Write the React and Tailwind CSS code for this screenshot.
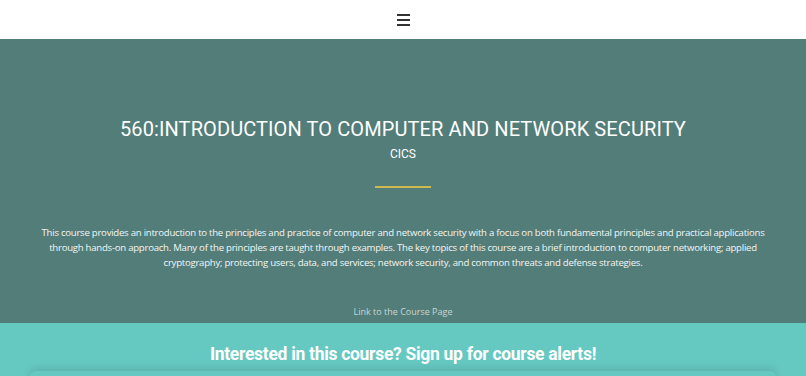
import React from 'react';

const App = () => {
    return (
        <div className="w-[806px] h-[376px] overflow-hidden bg-white">
            <header className="h-[39px] bg-white flex items-center justify-center">
                <button className="flex flex-col gap-[3px] w-[13px]" aria-label="Menu">
                    <span className="block h-[2px] w-full bg-[#333]" />
                    <span className="block h-[2px] w-full bg-[#333]" />
                    <span className="block h-[2px] w-full bg-[#333]" />
                </button>
            </header>

            <section className="h-[284px] bg-[#527d79] flex flex-col items-center text-white">
                <h1 className="mt-[77px] text-[20px] leading-[26px] font-['Roboto',sans-serif] font-normal tracking-[0.1px]">
                    560:INTRODUCTION TO COMPUTER AND NETWORK SECURITY
                </h1>
                <div className="mt-[5px] text-[12px] leading-[14px] font-['Roboto',sans-serif]">CICS</div>
                <div className="mt-[25px] h-[2px] w-[56px] bg-[#cfb84d]" />
                <p className="mt-[37px] w-[730px] text-center text-[9.6px] tracking-[-0.25px] leading-[15px] font-['Open_Sans',sans-serif] text-[#f2f5f4]">
                    This course provides an introduction to the principles and practice of computer and network security with a focus on both fundamental principles and practical applications through hands-on approach. Many of the principles are taught through examples. The key topics of this course are a brief introduction to computer networking; applied cryptography; protecting users, data, and services; network security, and common threats and defense strategies.
                </p>
                <a href="#" className="mt-[35px] text-[9px] leading-[14px] font-['Open_Sans',sans-serif] text-[#c9d6d4]">
                    Link to the Course Page
                </a>
            </section>

            <section className="h-[53px] bg-[#65c8c1] flex flex-col items-center relative">
                <h2 className="mt-[20px] text-[17.5px] tracking-[-0.3px] leading-[22px] font-['Roboto',sans-serif] font-bold text-white">
                    Interested in this course? Sign up for course alerts!
                </h2>
                <div className="absolute left-[30px] right-[30px] top-[48px] h-[10px] rounded-t-[6px] shadow-[0_-2px_8px_rgba(0,0,0,0.12)] bg-[#65c8c1]" />
            </section>
        </div>
    );
};

export default App;
